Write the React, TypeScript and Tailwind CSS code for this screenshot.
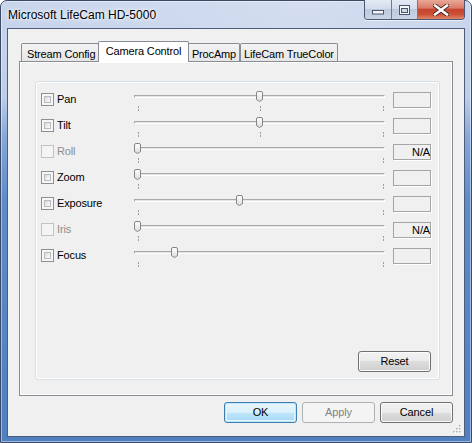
import React from "react";

type Row = {
  label: string;
  enabled: boolean;
  pos: number;
  mid?: boolean;
  value?: string;
};

const ROWS: Row[] = [
  { label: "Pan", enabled: true, pos: 0.502, mid: true },
  { label: "Tilt", enabled: true, pos: 0.502, mid: true },
  { label: "Roll", enabled: false, pos: 0, value: "N/A" },
  { label: "Zoom", enabled: true, pos: 0 },
  { label: "Exposure", enabled: true, pos: 0.42 },
  { label: "Iris", enabled: false, pos: 0, value: "N/A" },
  { label: "Focus", enabled: true, pos: 0.153 },
];

const THUMB_RANGE = 244;

function CheckBox({ enabled }: { enabled: boolean }) {
  if (!enabled) {
    return <div className="w-[13px] h-[13px] border border-[#c3c3c3] bg-[#f4f4f4]" />;
  }
  return (
    <div className="w-[13px] h-[13px] border border-[#8e8f8f] bg-[#f6f6f6] p-[2px]">
      <div className="w-full h-full border border-[#b8bcc1] bg-[linear-gradient(135deg,#d6d9dc_0%,#eceded_55%,#fbfbfb_100%)]" />
    </div>
  );
}

function Tick({ className }: { className: string }) {
  return (
    <span
      className={`absolute top-[19px] w-px h-[5px] bg-[linear-gradient(to_bottom,#9f9f9f_0px,#9f9f9f_2px,transparent_2px,transparent_3px,#9f9f9f_3px,#9f9f9f_5px)] ${className}`}
    />
  );
}

function Slider({ pos, mid }: { pos: number; mid?: boolean }) {
  return (
    <div className="relative w-[251px] h-[26px]">
      {/* channel */}
      <div className="absolute left-0 right-0 top-[8px] h-[3px] border-t border-l border-[#a9a9a9] border-b border-b-white border-r border-r-white bg-[#e4e4e4]" />
      {/* thumb */}
      <svg
        className="absolute top-[4px]"
        style={{ left: Math.round(pos * THUMB_RANGE) }}
        width="7"
        height="11"
        viewBox="0 0 7 11"
      >
        <defs>
          <linearGradient id="thumbFill" x1="0" y1="0" x2="0" y2="1">
            <stop offset="0" stopColor="#ffffff" />
            <stop offset="1" stopColor="#dcdcdc" />
          </linearGradient>
        </defs>
        <path
          d="M0.5 2 Q0.5 0.5 2 0.5 L5 0.5 Q6.5 0.5 6.5 2 L6.5 8.6 L3.5 10.5 L0.5 8.6 Z"
          fill="url(#thumbFill)"
          stroke="#858585"
        />
      </svg>
      <Tick className="left-[4px]" />
      {mid && <Tick className="left-[126px]" />}
      <Tick className="left-[249px]" />
    </div>
  );
}

function WinButton({
  label,
  variant = "normal",
}: {
  label: string;
  variant?: "normal" | "default" | "disabled";
}) {
  const styles = {
    normal:
      "border-[#707070] bg-[linear-gradient(#f2f2f2_0%,#ebebeb_50%,#dddddd_50%,#cfcfcf_100%)] shadow-[inset_0_0_0_1px_#fbfbfb] text-black",
    default:
      "border-[#3c7fb1] bg-[linear-gradient(#eaf6fd_0%,#d9f0fc_50%,#bee6fd_50%,#a7d9f5_100%)] shadow-[inset_0_0_0_1px_#bfe7fc,inset_0_0_0_2px_#e6f4fc] text-black",
    disabled: "border-[#adb2b5] bg-[#f4f4f4] text-[#838383]",
  }[variant];
  return (
    <div
      className={`w-[73px] h-[21px] border rounded-[3px] flex items-center justify-center text-[11px] leading-[13px] ${styles}`}
    >
      {label}
    </div>
  );
}

function CaptionButtons() {
  return (
    <div className="-mt-px h-[20px] flex border border-t-0 border-[#4b5872] rounded-b-[4px] overflow-hidden shadow-[0_1px_0_rgba(255,255,255,0.6)]">
      <div className="w-[27px] flex items-center justify-center bg-[linear-gradient(#e4eaf4_0%,#d3dced_45%,#bccade_50%,#c9d5e8_100%)] border-r border-[#6f7c95]">
        <svg width="12" height="5" viewBox="0 0 12 5" className="mt-[5px]">
          <rect x="0.5" y="0.5" width="11" height="3.5" fill="#f4f6fa" stroke="#4a566d" />
        </svg>
      </div>
      <div className="w-[26px] flex items-center justify-center bg-[linear-gradient(#e4eaf4_0%,#d3dced_45%,#bccade_50%,#c9d5e8_100%)] border-r border-[#6f7c95]">
        <svg width="11" height="10" viewBox="0 0 11 10">
          <rect x="0.5" y="0.5" width="10" height="9" fill="#f4f6fa" stroke="#4a566d" />
          <rect x="2.5" y="3.5" width="6" height="4" fill="#cfd8e8" stroke="#4a566d" />
        </svg>
      </div>
      <div className="w-[46px] flex items-center justify-center bg-[linear-gradient(#eaa898_0%,#d97a66_42%,#c7452e_50%,#c94f35_75%,#e0876a_100%)]">
        <svg width="16" height="12" viewBox="0 0 16 12">
          <path d="M2 1.5 L14 10.5 M14 1.5 L2 10.5" stroke="#4b2b26" strokeWidth="4.2" strokeLinecap="square" />
          <path d="M2 1.5 L14 10.5 M14 1.5 L2 10.5" stroke="#ffffff" strokeWidth="2.4" strokeLinecap="square" />
        </svg>
      </div>
    </div>
  );
}

function ResizeGrip() {
  const dots = [
    [6, 0],
    [3, 3],
    [6, 3],
    [0, 6],
    [3, 6],
    [6, 6],
  ];
  return (
    <svg className="absolute right-[2px] bottom-[2px]" width="9" height="9" viewBox="0 0 9 9">
      {dots.map(([x, y]) => (
        <g key={`${x}-${y}`}>
          <rect x={x + 1} y={y + 1} width="1.5" height="1.5" fill="#ffffff" />
          <rect x={x} y={y} width="1.5" height="1.5" fill="#a8adb6" />
        </g>
      ))}
    </svg>
  );
}

export default function App() {
  return (
    <div className="w-[472px] h-[443px] font-['Liberation_Sans',Arial,sans-serif]">
      <div className="w-full h-full flex flex-col rounded-t-[7px] border border-[#3a4a66] shadow-[inset_0_0_0_1px_rgba(255,255,255,0.45)] bg-[linear-gradient(180deg,#c8d5ec_0px,#bfcee8_95px,#86a8d9_135px,#5e8bc8_200px,#4f7fc1_443px)]">
        {/* Title bar */}
        <div className="h-[27px] flex items-start justify-between pl-[7px] pr-[6px] bg-[linear-gradient(90deg,rgba(255,255,255,0)_0%,rgba(255,255,255,0.22)_65%,rgba(255,255,255,0.05)_100%)]">
          <span className="mt-[7px] text-[12px] leading-[14px] text-black [text-shadow:0_0_6px_#ffffff,0_0_3px_#ffffff]">
            Microsoft LifeCam HD-5000
          </span>
          <CaptionButtons />
        </div>

        {/* Client area */}
        <div className="flex-1 px-[6px] pb-[5px]">
          <div className="relative h-full border border-[#4d5d7a] bg-[#f0f0f0] flex flex-col pt-[12px] px-[11px] text-[11px] tracking-[-0.15px] text-black">
            {/* Tabs */}
            <div className="h-[20px] flex items-end pl-[2px]">
              <div className="w-[78px] h-[18px] border border-b-0 border-[#898c95] rounded-t-[2px] bg-[linear-gradient(#f3f3f3,#e6e6e6)] pt-[4px] pl-[5px] leading-[13px] whitespace-nowrap">
                Stream Config
              </div>
              <div className="relative z-10 -mb-px w-[91px] h-[21px] -ml-px border border-b-0 border-[#898c95] rounded-t-[2px] bg-white pt-[3px] text-center leading-[13px] whitespace-nowrap">
                Camera Control
              </div>
              <div className="w-[52px] h-[18px] -ml-px border border-b-0 border-[#898c95] rounded-t-[2px] bg-[linear-gradient(#f3f3f3,#e6e6e6)] pt-[4px] text-center leading-[13px] whitespace-nowrap">
                ProcAmp
              </div>
              <div className="w-[98px] h-[18px] border border-b-0 border-[#898c95] rounded-t-[2px] bg-[linear-gradient(#f3f3f3,#e6e6e6)] pt-[4px] text-center leading-[13px] whitespace-nowrap">
                LifeCam TrueColor
              </div>
            </div>

            {/* Tab page */}
            <div className="h-[335px] border border-[#898c95] shadow-[inset_0_0_0_1px_#ffffff] bg-[#f0f0f0] pt-[19px] pl-[15px] pr-[12px] pb-[15px]">
              <div className="h-full border border-[#d5dfe5] rounded-[3px] shadow-[inset_0_0_0_1px_#ffffff] flex flex-col pt-[5px] pl-[5px]">
                {ROWS.map((row) => (
                  <div key={row.label} className="h-[26px] flex items-start">
                    <div className="mt-[6px]">
                      <CheckBox enabled={row.enabled} />
                    </div>
                    <span
                      className={`w-[80px] mt-[6px] pl-[3px] leading-[13px] ${
                        row.enabled ? "text-black" : "text-[#8d8d8d]"
                      }`}
                    >
                      {row.label}
                    </span>
                    <Slider pos={row.pos} mid={row.mid} />
                    <div className="ml-[8px] mt-[5px] w-[38px] h-[16px] border border-[#a5a5a5] shadow-[1px_1px_0_#ffffff] bg-[#f0f0f0] flex items-center justify-end leading-[14px]">
                      {row.value}
                    </div>
                  </div>
                ))}
                <div className="flex-1" />
                <div className="self-end mr-[8px] mb-[7px]">
                  <WinButton label="Reset" />
                </div>
              </div>
            </div>

            {/* Dialog buttons */}
            <div className="mt-[6px] flex justify-end gap-[5px]">
              <WinButton label="OK" variant="default" />
              <WinButton label="Apply" variant="disabled" />
              <WinButton label="Cancel" />
            </div>

            <ResizeGrip />
          </div>
        </div>
      </div>
    </div>
  );
}
